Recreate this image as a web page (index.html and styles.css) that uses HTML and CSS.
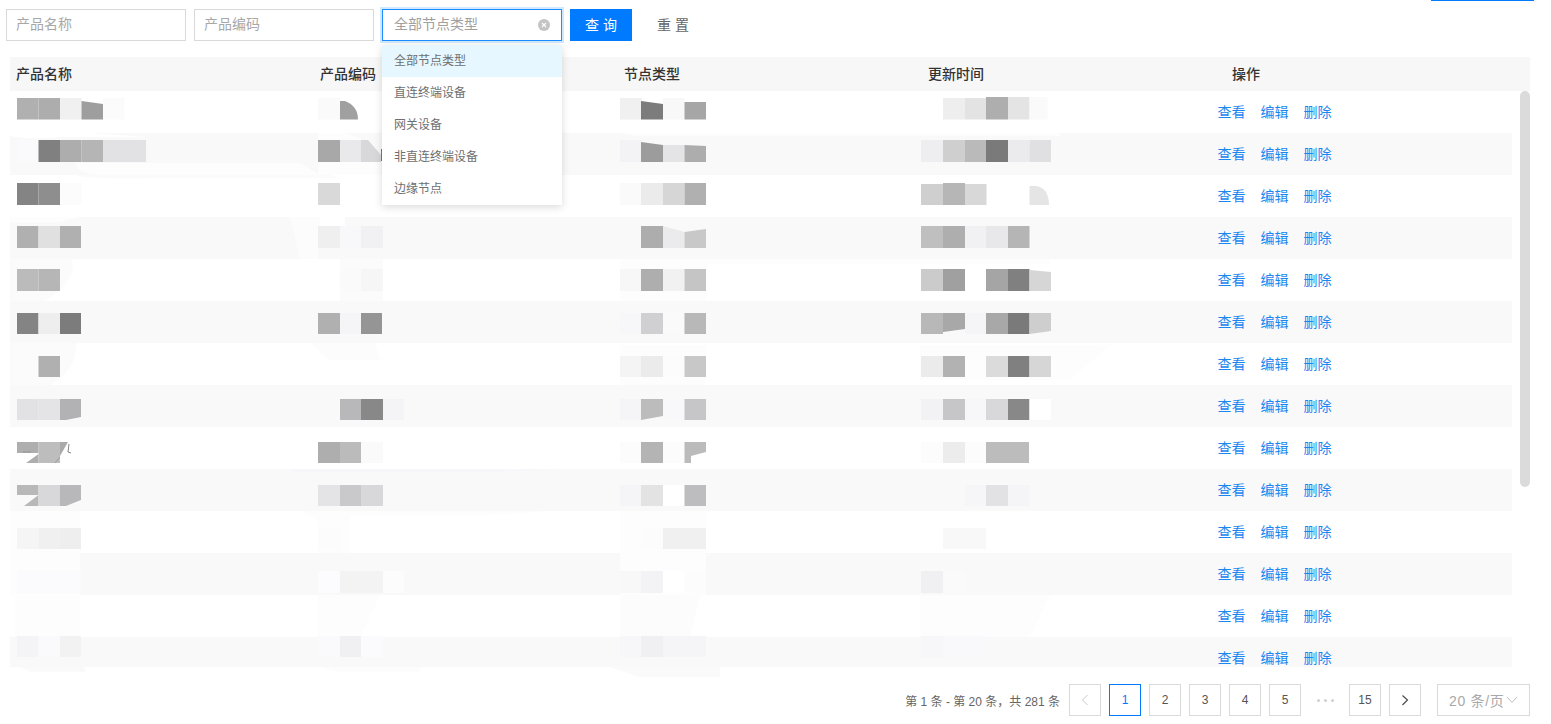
FILE: index.html
```html
<!DOCTYPE html>
<html lang="zh-CN">
<head>
<meta charset="utf-8">
<title>产品列表</title>
<link rel="stylesheet" href="styles.css">
</head>
<body>
<div class="page">
  <div class="tab-line"></div>
  <form class="toolbar">
    <div class="field">产品名称</div>
    <div class="field">产品编码</div>
    <div class="select-wrap">
      <div class="field field-focus">全部节点类型
        <svg class="clear-icon" width="12" height="12" viewBox="0 0 12 12"><circle cx="6" cy="6" r="6" fill="#c4c4c4"/><path d="M4 4l4 4M8 4l-4 4" stroke="#fff" stroke-width="1.1"/></svg>
      </div>
      <ul class="dropdown">
        <li class="option option-active">全部节点类型</li>
        <li class="option">直连终端设备</li>
        <li class="option">网关设备</li>
        <li class="option">非直连终端设备</li>
        <li class="option">边缘节点</li>
      </ul>
    </div>
    <div class="btn btn-primary">查 询</div>
    <div class="btn btn-plain">重 置</div>
  </form>

  <div class="table">
    <div class="thead">
      <div class="th">产品名称</div>
      <div class="th">产品编码</div>
      <div class="th">节点类型</div>
      <div class="th">更新时间</div>
      <div class="th">操作</div>
    </div>
    <div class="tbody">
      <div class="rows">
        <div class="row"><div class="actions"><a>查看</a><a>编辑</a><a>删除</a></div></div>
        <div class="row"><div class="actions"><a>查看</a><a>编辑</a><a>删除</a></div></div>
        <div class="row"><div class="actions"><a>查看</a><a>编辑</a><a>删除</a></div></div>
        <div class="row"><div class="actions"><a>查看</a><a>编辑</a><a>删除</a></div></div>
        <div class="row"><div class="actions"><a>查看</a><a>编辑</a><a>删除</a></div></div>
        <div class="row"><div class="actions"><a>查看</a><a>编辑</a><a>删除</a></div></div>
        <div class="row"><div class="actions"><a>查看</a><a>编辑</a><a>删除</a></div></div>
        <div class="row"><div class="actions"><a>查看</a><a>编辑</a><a>删除</a></div></div>
        <div class="row"><div class="actions"><a>查看</a><a>编辑</a><a>删除</a></div></div>
        <div class="row"><div class="actions"><a>查看</a><a>编辑</a><a>删除</a></div></div>
        <div class="row"><div class="actions"><a>查看</a><a>编辑</a><a>删除</a></div></div>
        <div class="row"><div class="actions"><a>查看</a><a>编辑</a><a>删除</a></div></div>
        <div class="row"><div class="actions"><a>查看</a><a>编辑</a><a>删除</a></div></div>
        <div class="row"><div class="actions"><a>查看</a><a>编辑</a><a>删除</a></div></div>
      </div>
      <div class="scroll-thumb"></div>
    </div>
  </div>

  <div class="pager">
    <span class="pager-total">第 1 条 - 第 20 条，共 281 条</span>
    <span class="pg pg-disabled"><svg width="10" height="12" viewBox="0 0 10 12"><path d="M7.500 1L2.500 6l5 5" fill="none" stroke="#c8c8c8"/></svg></span>
    <span class="pg pg-current">1</span>
    <span class="pg">2</span>
    <span class="pg">3</span>
    <span class="pg">4</span>
    <span class="pg">5</span>
    <span class="pg pg-dots"><i class="dot"></i><i class="dot"></i><i class="dot"></i></span>
    <span class="pg">15</span>
    <span class="pg pg-next"><svg width="10" height="12" viewBox="0 0 10 12"><path d="M2.500 1.500l5 4.500-5 5" fill="none" stroke="#444" stroke-width="1.100"/></svg></span>
    <span class="pg-size">20 条/页<svg width="12" height="8" viewBox="0 0 12 8"><path d="M1 1l5 5.500 5-5.500" fill="none" stroke="#bfbfbf"/></svg></span>
  </div>

  <!-- redaction overlay: smears and mosaic painted over the table data -->
  <svg class="mosaic" width="1551" height="724" viewBox="0 0 1551 724">
    <g fill="#fbfbfc">
      <path d="M10 259H72Q78 280 45 301H10Z"/>
      <path d="M340 259H383V301H340Z"/>
      <path d="M620 259H1050V264H706V301H620Z" fill="#fdfdfd"/>
      <path d="M10 343H76Q78 368 50 385H10Z"/>
      <path d="M310 343H375L380 360H330Z" fill="#fcfcfd"/>
      <path d="M620 345H706V385H620Z" fill="#fdfdfd"/>
      <path d="M920 345H1110L1070 380H920Z" fill="#fdfdfd"/>
      <path d="M75 175H330L340 178H160Q90 180 75 175Z"/>
      <path d="M290 469H565L500 472H290Z" fill="#f7f7f9"/>
      <path d="M10 511H80V595H10Z" fill="#fdfdfd"/>
      <path d="M300 511H550L480 516H350V553H318V520Z" fill="#fdfdfd"/>
      <path d="M620 511H706V595H620Z" fill="#fdfdfd"/>
      <path d="M15 595H80V637H15Z" fill="#fdfdfe"/>
      <path d="M318 595H380L360 637H318Z" fill="#fdfdfe"/>
      <path d="M620 595H700L690 637H620Z" fill="#fcfcfd"/>
      <path d="M920 595H1050L1030 637H920Z" fill="#fdfdfe"/>
      <path d="M20 667H85V672H30Z" fill="#fafafb"/>
      <path d="M320 667H420V672H340Z" fill="#fcfcfd"/>
      <path d="M610 667H720V677H640Z" fill="#fafafb"/>
    </g>
    <g fill="#ffffff">
      <path d="M10 133H90L145 137H60Q30 140 10 136Z"/>
      <path d="M75 163Q80 175 100 175H320L300 163Z" fill="#fdfdfe"/>
      <path d="M318 133H345Q372 140 381 160V175H318Z" fill="#fdfdfe"/>
      <path d="M290 217H335L345 235H318V259H300Z" fill="#fcfcfd"/>
      <path d="M80 217H10V222H60Z" fill="#fdfdfd"/>
      <path d="M620 133H1060V136H640Z" fill="#fdfdfd"/>
      <path d="M320 217H345V226H320Z"/>
    </g>
    <rect x="17" y="98" width="21.500" height="21.500" fill="#b0b0b0"/><rect x="38.500" y="98" width="21.500" height="21.500" fill="#adadad"/><rect x="60" y="98" width="21.500" height="21.500" fill="#f0f0f0"/><path d="M81.500 101L103 104V119.500H81.500Z" fill="#9e9e9e"/><rect x="103" y="98" width="21.500" height="21.500" fill="#fbfbfb"/>
    <rect x="318" y="98" width="22" height="21.500" fill="#fafafa"/><path d="M340 101H345Q358 106 358 119.500H340Z" fill="#a0a0a0"/>
    <rect x="620" y="98" width="21.500" height="21.500" fill="#f0f0f0"/><path d="M641 101L663 104V119.500H641Z" fill="#7c7c7c"/><rect x="663" y="98" width="21.500" height="21.500" fill="#f8f8f8"/><rect x="684.500" y="102" width="21.500" height="17.500" fill="#a6a6a6"/>
    <rect x="943" y="98" width="22" height="21.500" fill="#eeeeee"/><rect x="965" y="98" width="21.500" height="21.500" fill="#e3e3e3"/><rect x="986" y="97" width="22" height="22.500" fill="#aeaeae"/><rect x="1008" y="97" width="21.500" height="22.500" fill="#e4e4e4"/><rect x="1029.500" y="97" width="18" height="22.500" fill="#fafafa"/>

    <rect x="17" y="140" width="21.500" height="22" fill="#fafafc"/><rect x="38.500" y="140" width="21.500" height="22" fill="#808080"/><rect x="60" y="140" width="21.500" height="22" fill="#adadad"/><rect x="81.500" y="140" width="21.500" height="22" fill="#b5b5b5"/><rect x="103" y="140" width="43" height="22" fill="#e2e2e4"/>
    <rect x="318" y="140" width="22" height="22" fill="#a8a8a8"/><rect x="340" y="140" width="21" height="22" fill="#e9e9eb"/><path d="M361 140H368L381 155V162H361Z" fill="#d8d8da"/><rect x="381" y="149" width="1" height="12" fill="#777"/>
    <rect x="620" y="140" width="21.500" height="22" fill="#f3f3f5"/><path d="M641 142L663 145V162H641Z" fill="#9c9c9c"/><rect x="663" y="145" width="21.500" height="17" fill="#e4e4e6"/><path d="M684.500 145L706 146V162H684.500Z" fill="#adadad"/>
    <rect x="921" y="140" width="22" height="22" fill="#eeeef0"/><rect x="943" y="140" width="22" height="22" fill="#cfcfcf"/><rect x="965" y="140" width="21.500" height="22" fill="#bababa"/><rect x="986" y="140" width="22" height="22" fill="#7a7a7a"/><rect x="1008" y="140" width="21.500" height="22" fill="#ebebed"/><rect x="1029.500" y="140" width="21.500" height="22" fill="#e0e0e2"/>

    <rect x="17" y="183" width="21.500" height="22" fill="#848484"/><rect x="38.500" y="183" width="21.500" height="22" fill="#8e8e8e"/><rect x="60" y="183" width="21.500" height="22" fill="#fcfcfc"/>
    <rect x="318" y="183" width="22" height="22" fill="#d9d9d9"/>
    <rect x="620" y="183" width="21.500" height="22" fill="#fafafa"/><rect x="641" y="183" width="22" height="22" fill="#ebebeb"/><rect x="663" y="183" width="21.500" height="22" fill="#d6d6d6"/><rect x="684.500" y="183" width="21.500" height="22" fill="#b0b0b0"/>
    <rect x="921" y="184" width="22" height="21" fill="#cfcfcf"/><rect x="943" y="183" width="22" height="22" fill="#b6b6b6"/><rect x="965" y="184" width="21.500" height="21" fill="#d8d8d8"/><path d="M1029.500 186H1036Q1049 188 1049 205H1029.500Z" fill="#e5e5e5"/>

    <rect x="17" y="226" width="21.500" height="22" fill="#b0b0b0"/><rect x="38.500" y="226" width="21.500" height="22" fill="#e0e0e0"/><rect x="60" y="226" width="21" height="22" fill="#b0b0b0"/>
    <rect x="318" y="226" width="22" height="22" fill="#efefef"/><rect x="340" y="226" width="21" height="22" fill="#f8f8fa"/><rect x="361" y="226" width="22" height="22" fill="#f1f1f3"/>
    <rect x="641" y="226" width="22" height="22" fill="#adadad"/><path d="M663 226L684.500 232V248H663Z" fill="#ebebed"/><path d="M684.500 232L706 229V248H684.500Z" fill="#c8c8c8"/>
    <rect x="921" y="226" width="22" height="22" fill="#bfbfbf"/><rect x="943" y="226" width="22" height="22" fill="#aeaeae"/><rect x="965" y="226" width="21.500" height="22" fill="#f1f1f3"/><rect x="986" y="226" width="22" height="22" fill="#e8e8ea"/><rect x="1008" y="226" width="21.500" height="22" fill="#b5b5b5"/>

    <rect x="17" y="269" width="21.500" height="22" fill="#bbbbbb"/><rect x="38.500" y="269" width="21.500" height="22" fill="#b6b6b6"/>
    <rect x="340" y="269" width="21" height="22" fill="#fafafa"/><rect x="361" y="269" width="22" height="22" fill="#f6f6f6"/>
    <rect x="620" y="269" width="21.500" height="22" fill="#f7f7f7"/><rect x="641" y="269" width="22" height="22" fill="#aeaeae"/><rect x="663" y="269" width="21.500" height="22" fill="#f1f1f1"/><rect x="684.500" y="269" width="21.500" height="22" fill="#c5c5c5"/>
    <rect x="921" y="269" width="22" height="22" fill="#cbcbcb"/><rect x="943" y="269" width="22" height="22" fill="#a0a0a0"/><rect x="986" y="269" width="22" height="22" fill="#a5a5a5"/><rect x="1008" y="269" width="21.500" height="22" fill="#808080"/><path d="M1029.500 270L1051 272V291H1029.500Z" fill="#d6d6d6"/>

    <rect x="17" y="313" width="21.500" height="21" fill="#848484"/><rect x="38.500" y="313" width="21.500" height="21" fill="#eeeeee"/><rect x="60" y="313" width="21" height="21" fill="#7c7c7c"/>
    <rect x="318" y="313" width="22" height="21" fill="#b0b0b0"/><rect x="340" y="313" width="21" height="21" fill="#f5f5f7"/><rect x="361" y="313" width="21" height="21" fill="#959595"/>
    <rect x="620" y="313" width="21.500" height="21" fill="#f7f7f9"/><rect x="641" y="313" width="22" height="21" fill="#d0d0d2"/><rect x="663" y="313" width="21.500" height="21" fill="#fafafa"/><rect x="684.500" y="313" width="21.500" height="21" fill="#b8b8b8"/>
    <rect x="921" y="313" width="22" height="21" fill="#b8b8b8"/><path d="M943 313H965V329L943 332Z" fill="#a8a8a8"/><rect x="965" y="313" width="21.500" height="21" fill="#f5f5f7"/><rect x="986" y="313" width="22" height="21" fill="#a8a8a8"/><rect x="1008" y="313" width="21.500" height="21" fill="#7a7a7a"/><path d="M1029.500 313H1051V331L1029.500 334Z" fill="#cecece"/>

    <rect x="38.500" y="356" width="21.500" height="21" fill="#b0b0b0"/>
    <rect x="620" y="356" width="21.500" height="21" fill="#f4f4f4"/><rect x="641" y="356" width="22" height="21" fill="#ebebeb"/><rect x="663" y="356" width="21.500" height="21" fill="#fcfcfc"/><rect x="684.500" y="356" width="21.500" height="21" fill="#c8c8c8"/>
    <rect x="921" y="356" width="22" height="21" fill="#ebebeb"/><rect x="943" y="356" width="22" height="21" fill="#b2b2b2"/><rect x="986" y="356" width="22" height="21" fill="#dbdbdb"/><rect x="1008" y="356" width="21.500" height="21" fill="#808080"/><rect x="1029.500" y="356" width="21.500" height="21" fill="#d6d6d6"/>

    <rect x="17" y="399" width="21.500" height="21" fill="#e2e2e4"/><rect x="38.500" y="399" width="21.500" height="21" fill="#e4e4e6"/><path d="M60 399H81V417L66 420H60Z" fill="#b2b2b4"/>
    <rect x="340" y="399" width="21" height="21" fill="#b8b8ba"/><rect x="361" y="399" width="22" height="21" fill="#888888"/><rect x="383" y="399" width="21" height="21" fill="#f4f4f6"/>
    <rect x="620" y="399" width="21.500" height="21" fill="#f5f5f7"/><path d="M641 399H663V416L641 420Z" fill="#bcbcbc"/><rect x="663" y="399" width="21.500" height="21" fill="#f8f8fa"/><rect x="684.500" y="399" width="21.500" height="21" fill="#c6c6c8"/>
    <rect x="921" y="399" width="22" height="21" fill="#f2f2f4"/><rect x="943" y="399" width="22" height="21" fill="#c6c6c8"/><rect x="965" y="399" width="21.500" height="21" fill="#f7f7f9"/><rect x="986" y="399" width="22" height="21" fill="#d8d8da"/><rect x="1008" y="399" width="21.500" height="21" fill="#888888"/><rect x="1029.500" y="399" width="21.500" height="21" fill="#ffffff"/>

    <path d="M17 442H38.500V453H17ZM38.500 454V463H26Z" fill="#aeaeae"/><path d="M38.500 442H60V463H38.500Z" fill="#bdbdbd"/><path d="M60 442H68L60 456Z" fill="#aaaaaa"/><path d="M69 444L68 452L71 453" fill="none" stroke="#666" stroke-width="0.800"/><path d="M23 452h8M60 457l-5 6" stroke="#888" stroke-width="0.600" fill="none"/>
    <rect x="318" y="442" width="22" height="21" fill="#aeaeae"/><rect x="340" y="442" width="21" height="21" fill="#bbbbbb"/><rect x="361" y="442" width="22" height="21" fill="#fafafa"/>
    <rect x="620" y="442" width="21.500" height="21" fill="#fcfcfc"/><rect x="641" y="442" width="22" height="21" fill="#b4b4b4"/><rect x="663" y="442" width="21.500" height="21" fill="#fcfcfc"/><path d="M684.500 442H706V452L691 456V463H684.500Z" fill="#bbbbbb"/>
    <rect x="921" y="442" width="22" height="21" fill="#fcfcfc"/><rect x="943" y="442" width="22" height="21" fill="#ececec"/><rect x="965" y="442" width="21.500" height="21" fill="#fcfcfc"/><rect x="986" y="442" width="43" height="21" fill="#bcbcbc"/>

    <path d="M17 485H38.500V495H17ZM38.500 495V506H24Z" fill="#b8b8b8"/><rect x="38.500" y="485" width="21.500" height="21" fill="#d8d8da"/><path d="M60 485H81V500L66 506H60Z" fill="#b8b8ba"/>
    <rect x="318" y="485" width="22" height="21" fill="#e4e4e6"/><rect x="340" y="485" width="21" height="21" fill="#c9c9cb"/><rect x="361" y="485" width="22" height="21" fill="#d8d8da"/>
    <rect x="620" y="485" width="21.500" height="21" fill="#f5f5f7"/><rect x="641" y="485" width="22" height="21" fill="#e3e3e3"/><rect x="663" y="485" width="21.500" height="21" fill="#ffffff"/><rect x="684.500" y="485" width="21.500" height="21" fill="#bdbdbf"/>
    <rect x="965" y="485" width="21.500" height="21" fill="#f6f6f8"/><rect x="986" y="485" width="22" height="21" fill="#e2e2e4"/><rect x="1008" y="485" width="21.500" height="21" fill="#f5f5f7"/>

    <rect x="17" y="528" width="21.500" height="21" fill="#f5f5f5"/><rect x="38.500" y="528" width="21.500" height="21" fill="#f0f0f0"/><rect x="60" y="528" width="21" height="21" fill="#eeeeee"/>
    <rect x="318" y="528" width="22" height="21" fill="#fcfcfc"/>
    <rect x="641" y="528" width="22" height="21" fill="#fcfcfc"/><rect x="663" y="528" width="43" height="21" fill="#f0f0f0"/>
    <rect x="943" y="528" width="43" height="21" fill="#f8f8f8"/>

    <rect x="17" y="571" width="64" height="22" fill="#fbfbfd"/>
    <rect x="318" y="571" width="22" height="22" fill="#fcfcfe"/><rect x="340" y="571" width="43" height="22" fill="#f3f3f3"/><rect x="383" y="571" width="21" height="22" fill="#fcfcfc"/>
    <rect x="620" y="571" width="21.500" height="22" fill="#f8f8f8"/><rect x="641" y="571" width="22" height="22" fill="#f3f3f5"/><rect x="663" y="571" width="21.500" height="22" fill="#ffffff"/><rect x="684.500" y="571" width="21.500" height="22" fill="#fcfcfc"/>
    <rect x="921" y="571" width="22" height="22" fill="#f0f0f2"/><rect x="943" y="571" width="22" height="22" fill="#fafafa"/>

    <rect x="17" y="636" width="21.500" height="21" fill="#f4f4f6"/><rect x="38.500" y="636" width="21.500" height="21" fill="#fafafc"/><rect x="60" y="636" width="21" height="21" fill="#f2f2f2"/>
    <rect x="318" y="636" width="22" height="21" fill="#fafafc"/><rect x="340" y="636" width="21" height="21" fill="#f0f0f2"/><rect x="361" y="636" width="22" height="21" fill="#fbfbfd"/>
    <rect x="620" y="636" width="21.500" height="21" fill="#f7f7f9"/><rect x="641" y="636" width="22" height="21" fill="#f0f0f2"/><rect x="663" y="636" width="43" height="21" fill="#f5f5f7"/>
    <rect x="921" y="636" width="22" height="21" fill="#f7f7f9"/><rect x="943" y="636" width="43" height="21" fill="#f9f9fb"/>
  </svg>
</div>
</body>
</html>
```
FILE: styles.css
```css
* { box-sizing: border-box; }
html, body { margin: 0; padding: 0; background: #fff; }
body {
  font-family: "Liberation Sans", "Noto Sans CJK SC", sans-serif;
  font-size: 14px;
  color: #333;
  overflow: hidden;
}
.page { position: relative; width: 1551px; height: 724px; }
.tab-line { width: 103px; height: 1px; margin-left: 1431px; background: #007aff; }

.toolbar { display: flex; gap: 8px; padding: 8px 0 0 6px; }
.field {
  position: relative;
  width: 180px;
  height: 32px;
  padding: 0 9px;
  border: 1px solid #d9d9d9;
  line-height: 29px;
  color: #a8a8a8;
}
.field-focus {
  padding: 0 11px;
  border-color: #1c8cff;
  box-shadow: 0 0 0 2px rgba(24, 144, 255, 0.2);
  color: #a0a0a0;
}
.clear-icon { position: absolute; right: 11px; top: 9px; }
.select-wrap { position: relative; z-index: 3; }
.dropdown {
  position: absolute;
  left: 0;
  top: 36px;
  width: 180px;
  margin: 0;
  padding: 0;
  list-style: none;
  background: #fff;
  box-shadow: 0 2px 8px rgba(0, 0, 0, 0.15);
}
.option { height: 32px; padding: 0 12px; font-size: 12px; line-height: 33px; color: #6e6e6e; }
.option-active { background: #e6f7ff; }

.btn { height: 32px; line-height: 32px; text-align: center; }
.btn-primary { width: 62px; background: #007aff; color: #fff; }
.btn-plain { width: 66px; color: #666; }

.table { width: 1520px; margin: 16px 0 0 10px; }
.thead { display: grid; grid-template-columns: repeat(5, 304px); height: 34px; background: #f7f7f7; }
.th { padding-left: 6px; line-height: 34px; font-weight: 500; color: #333; }
.tbody { position: relative; height: 576px; overflow: hidden; }
.rows { width: 1502px; }
.row { display: flex; height: 42px; padding: 0 0 2px 1207.500px; align-items: center; }
.row:nth-child(even) { background: #f9f9fa; }
.actions { display: flex; gap: 15px; }
.actions a { color: #1a86f0; }
.scroll-thumb {
  position: absolute;
  right: 0;
  top: 0;
  width: 10px;
  height: 396px;
  border-radius: 5px;
  background: #dbdbdb;
}

.pager { display: flex; align-items: center; justify-content: flex-end; height: 32px; margin-top: 17px; padding-right: 21px; }
.pager-total { margin-right: 9px; font-size: 12px; color: #666; }
.pg {
  display: flex;
  align-items: center;
  justify-content: center;
  width: 32px;
  height: 32px;
  margin-right: 8px;
  border: 1px solid #d9d9d9;
  font-size: 12px;
  color: #555;
}
.pg-current { border-color: #007aff; color: #007aff; }
.pg-dots { gap: 4px; border: 0; }
.dot { width: 3px; height: 3px; border-radius: 50%; background: #d0d0d0; }
.pg-next { margin-right: 16px; }
.pg-size {
  display: flex;
  align-items: center;
  gap: 1px;
  width: 93px;
  height: 32px;
  padding-left: 11px;
  border: 1px solid #d9d9d9;
  letter-spacing: 0.7px;
  color: #a8a8a8;
  white-space: nowrap;
}

.mosaic { position: absolute; left: 0; top: 0; z-index: 1; pointer-events: none; }
```
